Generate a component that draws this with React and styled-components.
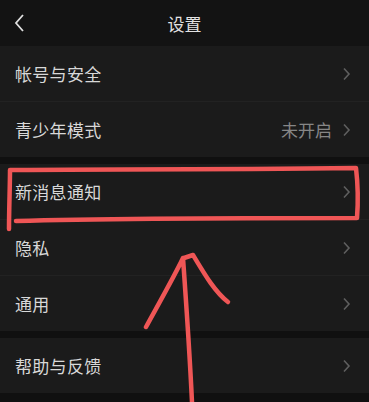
import styled, { createGlobalStyle } from "styled-components";

const GlobalStyle = createGlobalStyle`
  html, body {
    margin: 0;
    padding: 0;
    background: #101010;
  }
  body {
    font-family: "Noto Sans CJK SC", "Noto Sans", sans-serif;
  }
`;

const Screen = styled.div`
  position: relative;
  width: 369px;
  height: 402px;
  overflow: hidden;
  background: #101010;
  display: flex;
  flex-direction: column;
`;

const Header = styled.header`
  height: 46px;
  flex: none;
  display: flex;
  align-items: center;
  justify-content: center;
  position: relative;
  background: #131313;
  color: #e2e2e2;
  font-size: 17px;
`;

const BackBtn = styled.div`
  position: absolute;
  left: 12px;
  top: 13px;
  width: 16px;
  height: 20px;
`;

const Group = styled.section`
  background: #1b1b1b;
  margin-bottom: 7px;
  flex: none;
`;

const Row = styled.div`
  height: 55px;
  display: flex;
  align-items: center;
  padding: 0 18px 0 15px;
  border-top: ${(p) => (p.$divider ? "1px solid #222" : "none")};
  color: #d8d8d8;
  font-size: 17px;
`;

const Label = styled.span`
  flex: 1;
  letter-spacing: 0.3px;
`;

const Value = styled.span`
  color: #868686;
  font-size: 17px;
  margin-right: 10px;
`;

const Overlay = styled.svg`
  position: absolute;
  left: 0;
  top: 0;
  pointer-events: none;
`;

const Chevron = () => (
  <svg width="9" height="14" viewBox="0 0 9 14">
    <path d="M2 1.5 L7 7 L2 12.5" fill="none" stroke="#5f5f5f" strokeWidth="1.6" />
  </svg>
);

const groups = [
  [{ label: "帐号与安全" }, { label: "青少年模式", value: "未开启" }],
  [{ label: "新消息通知" }, { label: "隐私" }, { label: "通用" }],
  [{ label: "帮助与反馈" }],
];

export default function App() {
  return (
    <Screen>
      <GlobalStyle />
      <Header>
        <BackBtn>
          <svg width="16" height="20" viewBox="0 0 16 20">
            <path d="M11 2 L4 10 L11 18" fill="none" stroke="#e0e0e0" strokeWidth="1.8" />
          </svg>
        </BackBtn>
        设置
      </Header>
      {groups.map((g, gi) => (
        <Group key={gi}>
          {g.map((r, ri) => (
            <Row key={r.label} $divider={ri > 0}>
              <Label>{r.label}</Label>
              {r.value && <Value>{r.value}</Value>}
              <Chevron />
            </Row>
          ))}
        </Group>
      ))}
      <Overlay width="369" height="402" viewBox="0 0 369 402">
        <g fill="none" stroke="#ef5656" strokeWidth="4.5" strokeLinecap="round" strokeLinejoin="round">
          <path d="M9 229 C9 210 10 185 10 170 C80 169 200 170 356 168 C358 185 358 205 357 218 C260 218 120 218 16 221" />
          <path d="M192 402 C190 360 186 300 183 258 C175 275 158 305 146 327" />
          <path d="M184 258 L193 255 C205 275 215 292 228 302" />
        </g>
      </Overlay>
    </Screen>
  );
}
